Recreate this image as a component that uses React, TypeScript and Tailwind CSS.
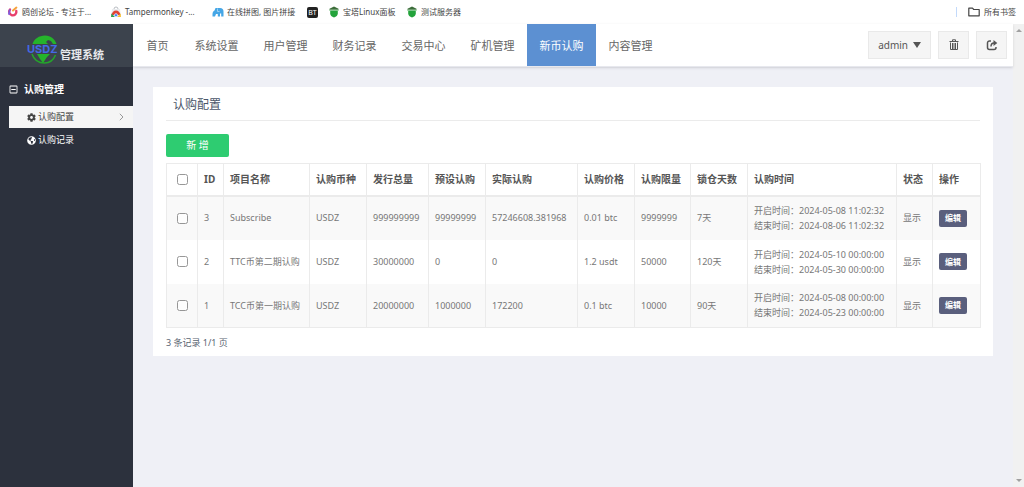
import type { ReactNode } from 'react';
import { FaCog, FaGlobeAmericas, FaRegMinusSquare } from 'react-icons/fa';

const bookmarkIcons = {
  forum: (
    <svg viewBox="0 0 12 12" className="size-3" aria-hidden="true">
      <path d="M3 3.5A3.6 3.6 0 1 0 9.3 5" fill="none" stroke="#e83e6b" strokeWidth="2.4" strokeLinecap="round" />
      <path d="M2.6 4.2 2 8" stroke="#7c5ce0" strokeWidth="1.8" strokeLinecap="round" />
      <path d="M6 4.5 9.4 1.6" stroke="#f6a13c" strokeWidth="2" strokeLinecap="round" />
    </svg>
  ),
  store: (
    <svg viewBox="0 0 12 12" className="size-3" aria-hidden="true">
      <path d="M2 3h8l1 8H1z" fill="#e9ebee" />
      <path d="M4 3a2 2 0 0 1 4 0" fill="none" stroke="#b9bdc2" />
      <path d="M1.6 9a4.4 4.4 0 0 1 8.8 0z" fill="#e14434" />
      <path d="M1.4 7.5 5 11H1z" fill="#2ea24c" />
      <path d="M10.6 7.5 7 11h4z" fill="#f8c332" />
      <circle cx="6" cy="9.2" r="1.6" fill="#4285f4" stroke="#fff" strokeWidth=".6" />
    </svg>
  ),
  puzzle: (
    <svg viewBox="0 0 12 12" className="size-3" aria-hidden="true">
      <path d="M.5 10.500V8C.5 6 1.500 5 2.500 4.500L3.500 2H8a3.500 3.500 0 0 1 3.500 3.500v5H9.200V7.500H8v3H5.800V8H4l-1 2.500z" fill="#45a6e6" />
      <path d="M5.500 2.500v3h2" fill="none" stroke="#bfe1f7" strokeWidth=".7" />
    </svg>
  ),
  shield: (
    <svg viewBox="0 0 12 12" className="size-3" aria-hidden="true">
      <path d="M6 .6 10.500 2.800v1H1.500v-1z" fill="#3c6d3a" />
      <path d="M2.200 4.500h7.600v3c0 2-1.500 3.300-3.800 4-2.300-.7-3.800-2-3.800-4z" fill="#23a33b" />
      <path d="M1 4.200h10" stroke="#6fbf7a" strokeWidth=".7" />
    </svg>
  ),
};

const bookmarks: { label: string; icon: ReactNode; width: string }[] = [
  { label: '鸥创论坛 - 专注于...', icon: bookmarkIcons.forum, width: 'w-[103px]' },
  { label: 'Tampermonkey -...', icon: bookmarkIcons.store, width: 'w-[102px]' },
  { label: '在线拼图, 图片拼接', icon: bookmarkIcons.puzzle, width: 'w-[95px]' },
];

const shieldBookmarks = [
  { label: '宝塔Linux面板', width: 'w-[78px]' },
  { label: '测试服务器', width: 'w-[70px]' },
];

const navItems = ['首页', '系统设置', '用户管理', '财务记录', '交易中心', '矿机管理', '新币认购', '内容管理'];

const columns = [
  { label: 'ID', width: 'w-[26px]' },
  { label: '项目名称', width: 'w-[86px]' },
  { label: '认购币种', width: 'w-[57px]' },
  { label: '发行总量', width: 'w-[62px]' },
  { label: '预设认购', width: 'w-[57px]' },
  { label: '实际认购', width: 'w-[92px]' },
  { label: '认购价格', width: 'w-[57px]' },
  { label: '认购限量', width: 'w-[56px]' },
  { label: '锁仓天数', width: 'w-[57px]' },
  { label: '认购时间', width: 'w-[149px]' },
  { label: '状态', width: 'w-[36px]' },
  { label: '操作', width: 'w-[48px]' },
];

const rows = [
  { id: 3, name: 'Subscribe', coin: 'USDZ', total: '999999999', preset: '99999999', actual: '57246608.381968', price: '0.01 btc', limit: '9999999', lock: '7天', start: '2024-05-08 11:02:32', end: '2024-08-06 11:02:32' },
  { id: 2, name: 'TTC币第二期认购', coin: 'USDZ', total: '30000000', preset: '0', actual: '0', price: '1.2 usdt', limit: '50000', lock: '120天', start: '2024-05-10 00:00:00', end: '2024-05-30 00:00:00' },
  { id: 1, name: 'TCC币第一期认购', coin: 'USDZ', total: '20000000', preset: '1000000', actual: '172200', price: '0.1 btc', limit: '10000', lock: '90天', start: '2024-05-08 00:00:00', end: '2024-05-23 00:00:00' },
];

const BookmarksBar = () => (
  <div className="flex h-6 items-center bg-white pr-2 pl-[7px] text-[8px] text-[#444]">
    {bookmarks.map(({ label, icon, width }) => (
      <a key={label} href="#" className={`flex items-center gap-[3px] whitespace-nowrap ${width}`}>
        {icon}
        {label}
      </a>
    ))}
    <a href="#" className="mr-[10px] flex h-[11px] w-[11px] items-center justify-center rounded-xs bg-[#222] text-[7px] leading-none text-white">
      BT
    </a>
    {shieldBookmarks.map(({ label, width }) => (
      <a key={label} href="#" className={`flex items-center gap-[3px] whitespace-nowrap ${width}`}>
        {bookmarkIcons.shield}
        {label}
      </a>
    ))}
    <span className="mr-[11px] ml-auto h-[10px] w-px bg-[#c3dafb]" />
    <a href="#" className="flex items-center gap-1">
      <svg viewBox="0 0 12 10" className="h-[10px] w-3" fill="none" stroke="#444" strokeWidth="1.200" aria-hidden="true">
        <path d="M.8 1.200h3.700l1.200 1.300h5.500v6.300H.8z" strokeLinejoin="round" />
      </svg>
      所有书签
    </a>
  </div>
);

const Logo = () => (
  <a href="#" className="flex h-[43px] w-[133px] shrink-0 items-center bg-[#3c434d] pt-[6px] pl-[27px]">
    <svg viewBox="0 0 33 32" className="h-8 w-[33px]" aria-hidden="true">
      <path d="M5.500 11C7 6 12 2.500 18 2.500c6 0 10 4 11.500 8.500L26 11l-2-3-3-1-2 2 2 2H7.500z" fill="#25b42b" />
      <path d="M10 21h13l-3 3-4 6-3-4z" fill="#25b42b" />
      <path d="M5 21c2 6 7 9 12.500 9 5 0 9-3 11-8" fill="none" stroke="#25a52b" strokeWidth="1.500" />
      <text x="0" y="20" fontFamily="Inter, sans-serif" fontSize="11" fontWeight="700" fill="#4468e6">USDZ</text>
    </svg>
    <span className="pt-3 text-[11px] leading-4 font-bold text-[#e6e8ea]">管理系统</span>
  </a>
);

const Header = () => (
  <header className="flex shrink-0">
    <Logo />
    <div className="z-10 flex min-w-0 flex-1 border-b border-[#e7e8ee] bg-white pr-[6px] shadow-sm">
      <nav className="flex">
        {navItems.map((item) => (
          <a
            key={item}
            href="#"
            className={`flex items-center justify-center pt-[2px] text-[11px] whitespace-nowrap ${
              item.length > 2 ? 'w-[69px]' : 'w-[49px]'
            } ${item === '新币认购' ? 'bg-[#5c90d2] text-white' : 'text-[#666]'}`}
          >
            {item}
          </a>
        ))}
      </nav>
      <div className="ml-auto flex items-center gap-[7px] text-[#555]">
        <button type="button" className="flex h-7 items-center gap-[5px] border border-[#e9e9e9] bg-[#f5f5f5] px-[9px] text-[10px]">
          admin
          <svg viewBox="0 0 8 6" className="h-[6px] w-2" fill="currentColor" aria-hidden="true">
            <path d="M0 0h8L4 6z" />
          </svg>
        </button>
        <button type="button" aria-label="清除缓存" className="flex h-7 w-[31px] items-center justify-center border border-[#e9e9e9] bg-[#f5f5f5]">
          <svg viewBox="0 0 10 12" className="h-3 w-[10px]" fill="none" stroke="currentColor" aria-hidden="true">
            <path d="M.5 2.500h9M3.500 2V.8h3V2M1.500 3.500v7h7v-7M3.500 4v6M5 4v6M6.500 4v6" />
          </svg>
        </button>
        <button type="button" aria-label="退出" className="flex h-7 w-[31px] items-center justify-center border border-[#e9e9e9] bg-[#f5f5f5]">
          <svg viewBox="0 0 12 12" className="size-3" fill="none" stroke="currentColor" strokeWidth="1.500" aria-hidden="true">
            <path d="M5 2H3.500A2 2 0 0 0 1.500 4v4.500a2 2 0 0 0 2 2H8a2 2 0 0 0 2-2V8" />
            <path d="M5 7.500C5 5 6 4 8 4" />
            <path d="M7.500 1 11.300 4 7.500 7z" fill="currentColor" stroke="none" />
          </svg>
        </button>
      </div>
    </div>
  </header>
);

const Sidebar = () => (
  <aside className="w-[133px] shrink-0 bg-[#2c313d] pt-[13px] text-[9px] text-white">
    <h2 className="flex h-[18px] items-center gap-[6px] pl-[9px] text-[10px] font-bold">
      <FaRegMinusSquare className="size-[9px]" />
      认购管理
    </h2>
    <ul className="pt-2 pl-[9px]">
      <li>
        <a href="#" className="flex h-[22px] items-center gap-[2px] bg-[#f5f5f5] pr-[9px] pl-[18px] text-[#444]">
          <FaCog className="size-[9px]" />
          认购配置
          <svg viewBox="0 0 5 8" className="ml-auto h-2 w-[5px]" fill="none" stroke="#999" aria-hidden="true">
            <path d="M.8.8 4 4 .8 7.200" />
          </svg>
        </a>
      </li>
      <li>
        <a href="#" className="flex h-6 items-center gap-[2px] pl-[18px]">
          <FaGlobeAmericas className="size-[9px]" />
          认购记录
        </a>
      </li>
    </ul>
  </aside>
);

const SubscribeTable = () => (
  <table className="w-full table-fixed border-collapse border border-[#ebebeb] text-left text-[9px] text-[#777]">
    <thead className="text-[10px] text-[#555]">
      <tr className="h-8 border-b-2 border-[#ebebeb]">
        <th className="w-[31px] border-r border-[#ebebeb]">
          <input type="checkbox" aria-label="全选" className="mx-auto block size-[11px] opacity-75" />
        </th>
        {columns.map(({ label, width }) => (
          <th key={label} className={`border-r border-[#ebebeb] pl-[6px] font-bold whitespace-nowrap ${width}`}>
            {label}
          </th>
        ))}
      </tr>
    </thead>
    <tbody>
      {rows.map((row) => (
        <tr key={row.id} className="h-11 whitespace-nowrap odd:bg-[#f9f9f9] [&>td]:border-r [&>td]:border-[#ebebeb] [&>td]:pl-[6px]">
          <td className="pr-[6px]">
            <input type="checkbox" aria-label={`选择 ${row.id}`} className="mx-auto block size-[11px] opacity-75" />
          </td>
          <td>{row.id}</td>
          <td>{row.name}</td>
          <td>{row.coin}</td>
          <td>{row.total}</td>
          <td>{row.preset}</td>
          <td>{row.actual}</td>
          <td>{row.price}</td>
          <td>{row.limit}</td>
          <td>{row.lock}</td>
          <td className="leading-[15px]">
            <div>开启时间：{row.start}</div>
            <div>结束时间：{row.end}</div>
          </td>
          <td>显示</td>
          <td>
            <a href="#" className="flex h-[17px] w-7 items-center justify-center rounded-xs bg-[#5a5f7d] text-[8px] font-bold text-white">
              编辑
            </a>
          </td>
        </tr>
      ))}
    </tbody>
  </table>
);

const ScrollBar = () => (
  <div className="flex w-[11px] shrink-0 flex-col items-center justify-between bg-[#f1f1f1] py-[5px]" aria-hidden="true">
    <svg viewBox="0 0 6 3" className="h-[3px] w-[6px]" fill="#a0a0a0">
      <path d="M3 0 6 3H0z" />
    </svg>
    <svg viewBox="0 0 6 3" className="h-[3px] w-[6px]" fill="#a0a0a0">
      <path d="M0 0h6L3 3z" />
    </svg>
  </div>
);

export default function App() {
  return (
    <div className="flex min-h-screen flex-col bg-[#eff0f6] font-['Noto_Sans','Noto_Sans_CJK_SC',sans-serif]">
      <BookmarksBar />
      <div className="flex flex-1">
        <div className="flex min-w-0 flex-1 flex-col">
          <Header />
          <div className="flex flex-1">
            <Sidebar />
            <main className="min-w-0 flex-1 p-5">
              <section className="bg-white px-[13px] pb-1">
                <h1 className="mb-[13px] flex h-[34px] items-center border-b border-[#ebebeb] pt-[2px] pl-[7px] text-[12px] text-[#4a5568]">认购配置</h1>
                <button type="button" className="mb-[6px] block h-[23px] w-[63px] rounded-xs bg-[#2ecc71] text-[10px] text-white">
                  新 增
                </button>
                <SubscribeTable />
                <p className="pt-[6px] text-[9px] leading-[18px] text-[#5a6472]">3 条记录 1/1 页</p>
              </section>
            </main>
          </div>
        </div>
        <ScrollBar />
      </div>
    </div>
  );
}
